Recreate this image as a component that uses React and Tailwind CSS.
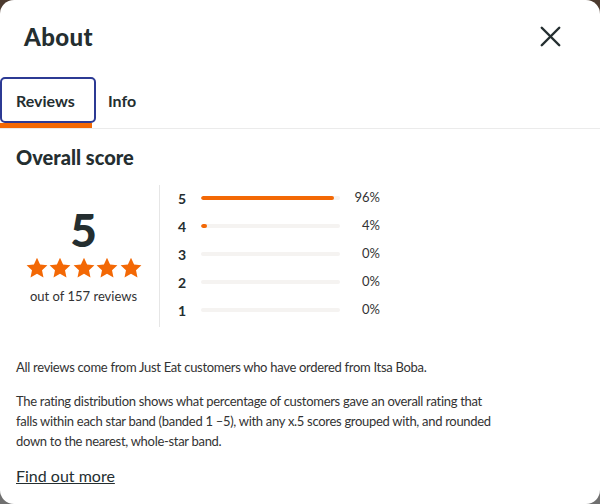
import React from 'react';
import { X } from 'lucide-react';

const distribution = [
    { stars: 5, pct: 96 },
    { stars: 4, pct: 4 },
    { stars: 3, pct: 0 },
    { stars: 2, pct: 0 },
    { stars: 1, pct: 0 },
];

const Star = () => (
    <svg width="22" height="21" viewBox="0 0 24 23" className="text-[#f36805]">
        <path fill="currentColor" d="M12 0.8l3.4 7.3 8 .9-5.9 5.5 1.6 7.9L12 18.4l-7.1 4 1.6-7.9L.6 9l8-.9z" />
    </svg>
);

const App = () => {
    return (
        <div className="w-[600px] h-[504px] bg-linear-to-b from-[#4b3a2e] to-[#707070] font-['Lato',sans-serif] text-[#333]">
            <div className="w-full h-full bg-white rounded-[14px] overflow-hidden flex flex-col">

                {/* header */}
                <div className="flex items-center justify-between pl-6 pr-[32px] h-[73px]">
                    <h1 className="text-[24px] font-black tracking-[0.4px] text-[#242e30]">About</h1>
                    <X size={35} strokeWidth={1.65} className="text-[#242e30]" />
                </div>

                {/* tabs */}
                <div className="flex items-end border-b border-[#ebebeb] h-[56px] pt-[4px]">
                    <div className="relative h-full">
                        <div className="h-[46px] w-[96px] border-2 border-[#2c3a94] rounded-[5px] flex items-center pl-[14px] pt-[2px] text-[16px] font-bold text-[#242e30]">
                            Reviews
                        </div>
                        <div className="absolute left-0 bottom-0 w-[92px] h-[5px] bg-[#f36805]" />
                    </div>
                    <div className="h-[46px] mb-[5px] flex items-center pl-[12px] pt-[2px] text-[16px] font-bold text-[#242e30]">Info</div>
                </div>

                {/* overall score */}
                <div className="px-4 pt-[16px]">
                    <h2 className="text-[20px] font-black text-[#242e30] leading-[24px]">Overall score</h2>

                    <div className="flex mt-[16px] h-[142px]">
                        <div className="w-[144px] pr-2 flex flex-col items-center pt-[22px] border-r border-[#e6e6e6]">
                            <div className="text-[46px] font-black leading-[46px] text-[#242e30]">5</div>
                            <div className="flex gap-[1.5px] mt-[4px]">
                                {[0, 1, 2, 3, 4].map(i => <Star key={i} />)}
                            </div>
                            <div className="text-[13px] mt-[9px] text-[#333]">out of 157 reviews</div>
                        </div>

                        <div className="flex flex-col pl-[18px] -mt-[1px]">
                            {distribution.map(row => (
                                <div key={row.stars} className="flex items-center h-[28px]">
                                    <span className="w-[23px] text-[14px] font-bold text-[#242e30]">{row.stars}</span>
                                    <div className="w-[139px] h-[4px] rounded-full bg-[#f5f3f1] overflow-hidden">
                                        <div className="h-full rounded-full bg-[#f36805]" style={{ width: `${row.pct}%` }} />
                                    </div>
                                    <span className="w-[40px] text-right text-[13px] text-[#333]">{row.pct}%</span>
                                </div>
                            ))}
                        </div>
                    </div>

                    {/* info */}
                    <div className="w-[490px] text-[13px] leading-[20px] tracking-[-0.3px]">
                        <p className="mt-[30px]">
                            All reviews come from Just Eat customers who have ordered from Itsa Boba.
                        </p>
                        <p className="mt-[14px]">
                            The rating distribution shows what percentage of customers gave an overall rating that falls within each star band (banded 1 –5), with any x.5 scores grouped with, and rounded down to the nearest, whole-star band.
                        </p>
                    </div>
                    <a href="#" className="inline-block mt-[13px] text-[16px] underline text-[#242e30]">Find out more</a>
                </div>
            </div>
        </div>
    );
};

export default App;
